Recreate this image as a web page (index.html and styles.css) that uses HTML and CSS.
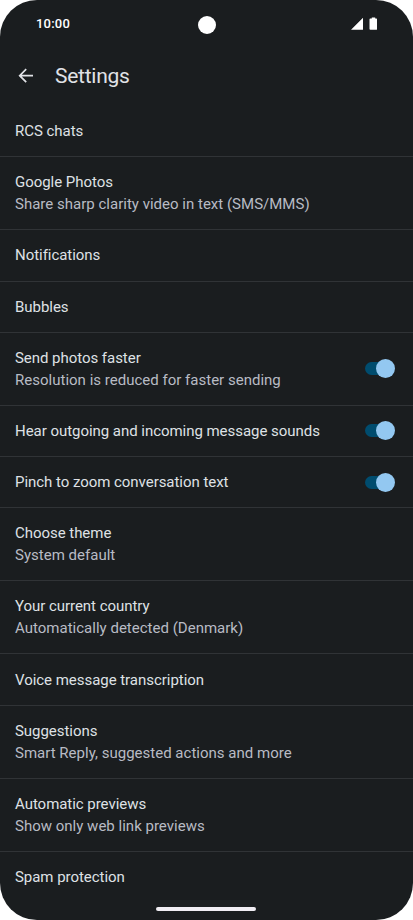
FILE: index.html
```
<!DOCTYPE html>
<html lang="en">
<head>
<meta charset="utf-8">
<title>Settings</title>
<link rel="stylesheet" href="styles.css">
</head>
<body>
<div class="phone">
  <header class="status">
    <span class="clock">10:00</span>
    <span class="camera"></span>
    <svg class="indicators" width="28" height="14" viewBox="0 0 28 14"><path fill="#fff" d="M0 12.8 12 .8v12zM19.4 1.4h1.4V.4h3.4v1h1.2q.6 0 .6.6v10.2q0 .6-.6.6h-6q-.9 0-.9-.8V2.2q0-.8.9-.8z"/></svg>
  </header>
  <div class="appbar">
    <svg width="16" height="16" viewBox="0 0 16 16"><path fill="none" stroke="#e0e2e6" stroke-width="1.7" d="M15 7.7H2M8.2 1.2 1.7 7.7l6.5 6.5"/></svg>
    <h1>Settings</h1>
  </div>
  <main>
    <section class="row"><p class="title">RCS chats</p></section>
    <section class="row double"><p class="title">Google Photos</p><p class="sub">Share sharp clarity video in text (SMS/MMS)</p></section>
    <section class="row"><p class="title">Notifications</p></section>
    <section class="row"><p class="title">Bubbles</p></section>
    <section class="row double"><p class="title">Send photos faster</p><p class="sub">Resolution is reduced for faster sending</p><span class="switch"></span></section>
    <section class="row"><p class="title">Hear outgoing and incoming message sounds</p><span class="switch"></span></section>
    <section class="row"><p class="title">Pinch to zoom conversation text</p><span class="switch"></span></section>
    <section class="row double"><p class="title">Choose theme</p><p class="sub">System default</p></section>
    <section class="row double"><p class="title">Your current country</p><p class="sub">Automatically detected (Denmark)</p></section>
    <section class="row"><p class="title">Voice message transcription</p></section>
    <section class="row double"><p class="title">Suggestions</p><p class="sub">Smart Reply, suggested actions and more</p></section>
    <section class="row double"><p class="title">Automatic previews</p><p class="sub">Show only web link previews</p></section>
    <section class="row"><p class="title">Spam protection</p></section>
  </main>
  <div class="home"></div>
</div>
</body>
</html>
```
FILE: styles.css
```
* { box-sizing: border-box; margin: 0; padding: 0; }
body { background: #fff; font-family: Roboto, "Liberation Sans", sans-serif; overflow: hidden; }
.phone { position: relative; width: 413px; height: 920px; background: #1a1d1f; border-radius: 37px; overflow: hidden; }
.status { display: grid; grid-template-columns: 1fr 18px 1fr; align-items: center; height: 49px; padding: 0 34px 0 36px; }
.clock { color: #fff; font-size: 13px; font-weight: 500; line-height: 16px; letter-spacing: .2px; position: relative; top: -1px; }
.camera { width: 18px; height: 18px; margin-left: -.8px; border-radius: 50%; background: #fff; }
.indicators { justify-self: end; position: relative; top: -1px; }
.appbar { display: flex; align-items: center; height: 54px; padding-left: 18px; gap: 21px; }
h1 { color: #e0e2e6; font-size: 21px; font-weight: 400; line-height: 26px; letter-spacing: -.25px; }
main { padding-top: 3.1px; }
.row { display: grid; grid-template-columns: 1fr 30px; align-content: center; align-items: center; height: 51.2px; padding: 0 18px 0 15px; border-bottom: 1px solid #303336; white-space: nowrap; }
.row:last-child { border: 0; }
.double { height: 73.1px; }
.title, .sub { grid-column: 1; font-size: 15px; line-height: 22px; letter-spacing: -.04px; }
.title { color: #dfe1e5; }
.sub { color: #b8bbc4; letter-spacing: .01px; }
.switch { position: relative; grid-column: 2; grid-row: 1; width: 30px; height: 19px; }
.double .switch { grid-row: 1 / 3; }
.switch::before { content: ""; position: absolute; left: 0; top: 3px; width: 26px; height: 13px; border-radius: 7px; background: #004c6e; }
.switch::after { content: ""; position: absolute; right: 0; top: 0; width: 19px; height: 19px; border-radius: 50%; background: #93c8f1; }
.home { position: absolute; left: 156px; top: 907px; width: 100px; height: 4px; border-radius: 2px; background: #f0edf3; }
```
